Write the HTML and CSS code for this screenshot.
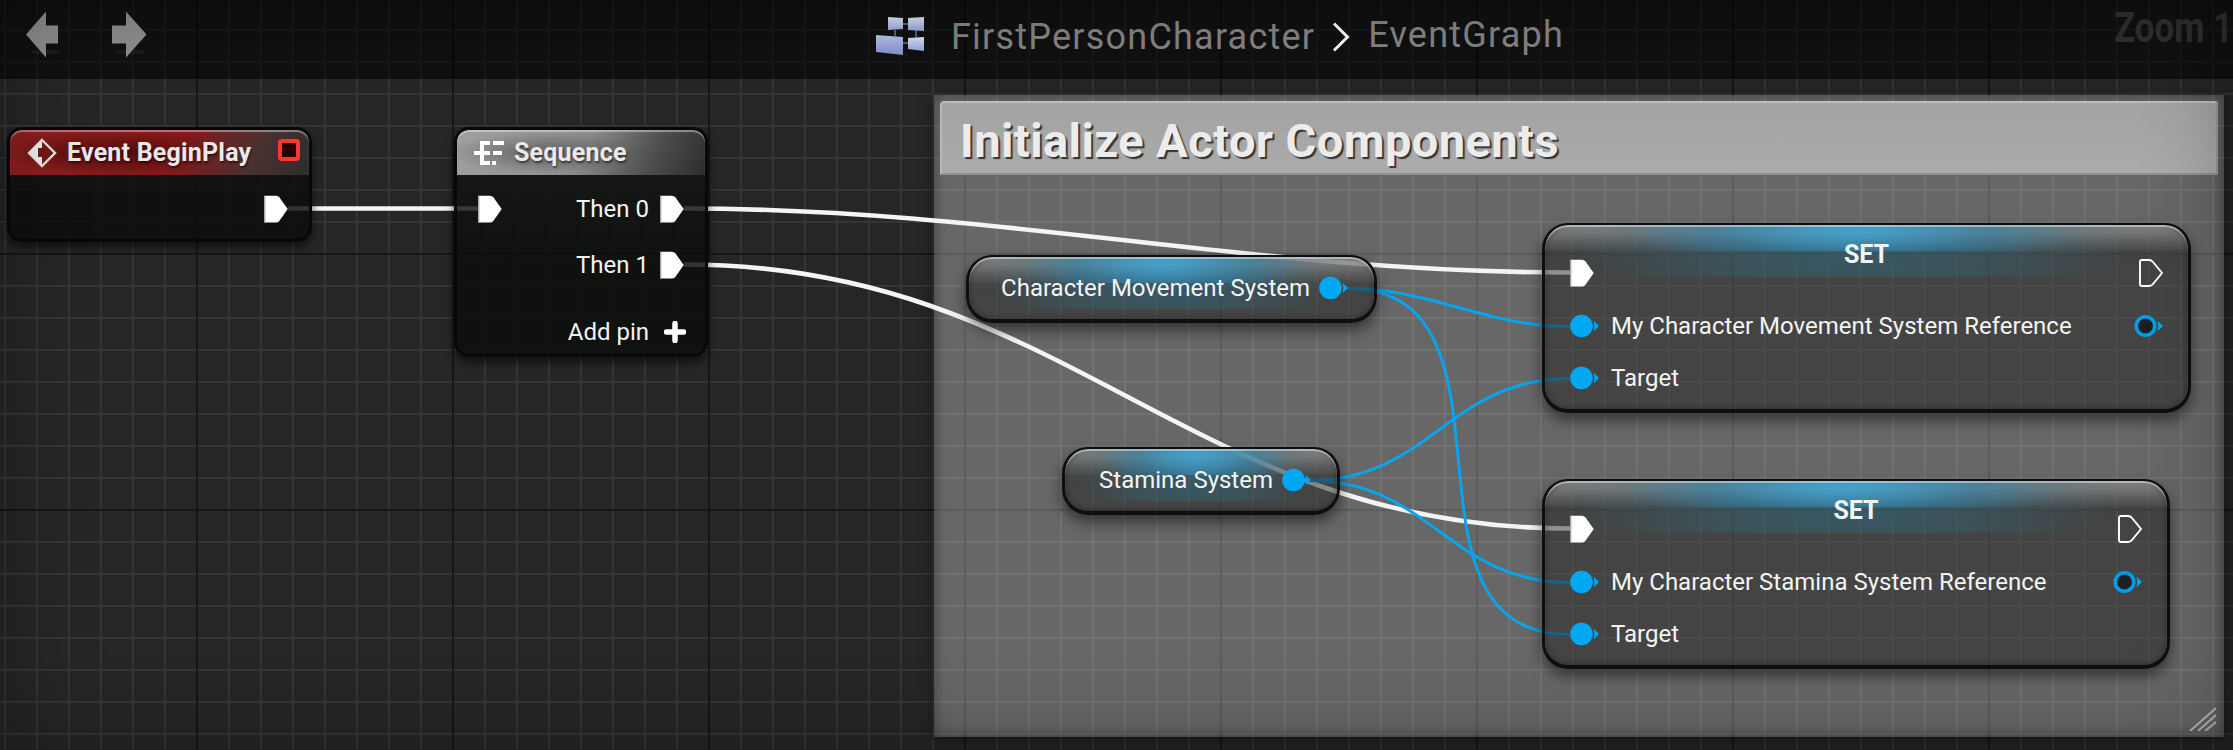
FILE: index.html
```html
<!DOCTYPE html>
<html lang="en">
<head>
<meta charset="utf-8">
<title>EventGraph</title>
<link rel="stylesheet" href="styles.css">
</head>
<body>
<svg width="0" height="0" class="defs">
  <defs>
    <linearGradient id="tile" x1="0" y1="0" x2="0" y2="1"><stop offset="0" stop-color="#dfe6fa"/><stop offset="1" stop-color="#96a5dc"/></linearGradient>
    <linearGradient id="tileBig" x1="0" y1="0" x2="0" y2="1"><stop offset="0" stop-color="#b9c4ee"/><stop offset="1" stop-color="#8292cf"/></linearGradient>
    <symbol id="exec" viewBox="0 0 24 28"><path d="M.5 .7h11.500q2 0 3.300 1.500L23.700 14l-8.400 12q-1.300 1.500-3.300 1.500H.5z" fill="#fff"/><path d="M.7 .7v26.800" stroke="#aaa" stroke-width="1.400"/></symbol>
    <symbol id="exec-open" viewBox="0 0 24 28"><path d="M1 3q0-2 2-2h7q2.500 0 4 2L23 14l-9 11q-1.500 2-4 2H3q-2 0-2-2z" fill="none" stroke="#fff" stroke-width="1.900"/></symbol>
    <symbol id="obj" viewBox="0 0 29 24"><circle cx="11.500" cy="12" r="11.300" fill="#00a8f3"/><path d="M23.300 6.500L29 12l-5.700 5.500q2-5.500 0-11z" fill="#00a8f3"/></symbol>
    <symbol id="obj-open" viewBox="0 0 29 24"><circle cx="11.500" cy="12" r="9.300" fill="#1d2022" stroke="#009ee6" stroke-width="3.600"/><path d="M23.300 6.500L29 12l-5.700 5.500q2-5.500 0-11z" fill="#00a8f3"/></symbol>
  </defs>
</svg>
<main class="graph">
  <section class="comment">
    <h2 class="comment-title">Initialize Actor Components</h2>
    <svg class="grip" width="28" height="24" viewBox="0 0 28 24"><path d="M1 24L27 1M9 24L27 8M16 24l11-9" fill="none" stroke="#bbb" stroke-width="2"/></svg>
  </section>

  <svg class="wires" width="2233" height="750" viewBox="0 0 2233 750">
    <g class="wire-exec">
      <path d="M288 208.500H478"/>
      <path d="M684 208.500C1001 208.500 1253 272.500 1570 272.500"/>
      <path d="M684 264.500C1067 264.500 1187 528.500 1570 528.500"/>
    </g>
    <g class="wire-object">
      <path d="M1347 288.500C1434 288.500 1483 326.500 1570 326.500"/>
      <path d="M1347 288.500C1537 288.500 1380 634.500 1570 634.500"/>
      <path d="M1309 480.500C1430 480.500 1449 378.500 1570 378.500"/>
      <path d="M1309 480.500C1430 480.500 1449 582.500 1570 582.500"/>
    </g>
  </svg>

  <article class="node event">
    <header class="node-head">
      <svg class="head-icon" width="30" height="30" viewBox="0 0 30 30"><path d="M15 2L28 15 15 28 2 15z" fill="none" stroke="#e8e0e0" stroke-width="2.400"/><path d="M15 2v8h-4v9h4v9L1.500 15z" fill="#eee"/></svg>
      <span class="head-text">Event BeginPlay</span>
      <i class="delegate"></i>
    </header>
    <div class="row end"><svg width="24" height="28"><use href="#exec"/></svg></div>
  </article>

  <article class="node sequence">
    <header class="node-head">
      <svg class="head-icon" width="30" height="26" viewBox="0 0 30 26"><path d="M0 13h16M6 3h10M19 3h11M19 13h9M6 23h10M18 23h4M8 2v22" fill="none" stroke="#fff" stroke-width="4"/></svg>
      <span class="head-text">Sequence</span>
    </header>
    <div class="row"><svg width="24" height="28"><use href="#exec"/></svg><span class="push">Then 0</span><svg width="24" height="28"><use href="#exec"/></svg></div>
    <div class="row"><span class="push">Then 1</span><svg width="24" height="28"><use href="#exec"/></svg></div>
    <div class="row add"><span class="push">Add pin</span><svg width="22" height="22" viewBox="0 0 22 22"><path d="M11 2.500v17M2.500 11h17" stroke="#fff" stroke-width="5.500" stroke-linecap="round"/></svg></div>
  </article>

  <article class="node glass variable movement">
    <span>Character Movement System</span><svg width="29" height="24"><use href="#obj"/></svg>
  </article>
  <article class="node glass variable stamina">
    <span>Stamina System</span><svg width="29" height="24"><use href="#obj"/></svg>
  </article>

  <article class="node glass setter set-movement">
    <div class="set-head"><svg width="24" height="28"><use href="#exec"/></svg><b>SET</b><svg width="24" height="28"><use href="#exec-open"/></svg></div>
    <div class="set-row"><svg width="29" height="24"><use href="#obj"/></svg><span class="ref-name">My Character Movement System Reference</span><svg width="29" height="24"><use href="#obj-open"/></svg></div>
    <div class="set-row"><svg width="29" height="24"><use href="#obj"/></svg><span>Target</span></div>
  </article>
  <article class="node glass setter set-stamina">
    <div class="set-head"><svg width="24" height="28"><use href="#exec"/></svg><b>SET</b><svg width="24" height="28"><use href="#exec-open"/></svg></div>
    <div class="set-row"><svg width="29" height="24"><use href="#obj"/></svg><span class="ref-name">My Character Stamina System Reference</span><svg width="29" height="24"><use href="#obj-open"/></svg></div>
    <div class="set-row"><svg width="29" height="24"><use href="#obj"/></svg><span>Target</span></div>
  </article>

  <nav class="topbar">
    <div class="history">
      <svg width="34" height="48" viewBox="0 0 34 48"><ellipse cx="19" cy="42" rx="15" ry="2.500" fill="#1c1c1c"/><path d="M0 24.500L20 1.500v14h12v18H20v14z" fill="#8e8e8e"/></svg>
      <svg width="36" height="48" viewBox="0 0 36 48"><ellipse cx="19" cy="42" rx="15" ry="2.500" fill="#1c1c1c"/><path d="M34.500 24.500L14 1.500v14H0v18h14v14z" fill="#8e8e8e"/></svg>
    </div>
    <div class="crumbs">
      <svg width="48" height="38" viewBox="0 0 48 38"><path d="M26 7h8M26 26h8M19 13v6M40 13v7" stroke="#6e7894" stroke-width="1.500"/><path d="M12 0l15 1v11l-15 1zM32 1l16-1v14l-16-1z" fill="url(#tile)"/><path d="M0 18l27 2v18L0 35z" fill="url(#tileBig)"/><path d="M32 21l16-1v14l-16-2z" fill="url(#tile)"/></svg>
      <span class="crumb">FirstPersonCharacter</span>
      <svg class="chevron" width="18" height="30" viewBox="0 0 18 30"><path d="M2 1.500L15.500 15 2 28.500" fill="none" stroke="#fff" stroke-width="3"/></svg>
      <span class="crumb current">EventGraph</span>
    </div>
    <span class="zoom">Zoom 1</span>
  </nav>
</main>
</body>
</html>
```
FILE: styles.css
```css
body { margin: 0; background: #262626; }
.defs { position: absolute; }
svg { display: block; flex: none; }

.graph {
  position: relative;
  width: 2233px;
  height: 750px;
  overflow: hidden;
  font: 400 24px/40px Roboto, sans-serif;
  color: #f4f4f4;
  background:
    linear-gradient(90deg, #161616 2px, transparent 2px) 196px 0 / 256px 256px,
    linear-gradient(#161616 2px, transparent 2px) 0 253px / 256px 256px,
    linear-gradient(90deg, #353535 2px, transparent 2px) 4px 0 / 32px 32px,
    linear-gradient(#353535 2px, transparent 2px) 0 29px / 32px 32px,
    #262626;
}
.graph::after {
  content: "";
  position: absolute;
  inset: 0;
  pointer-events: none;
  box-shadow: inset 0 0 90px rgba(0, 0, 0, .3);
}

/* Top bar */
.topbar {
  position: absolute;
  inset: 0 0 auto 0;
  height: 79px;
  background: rgba(0, 0, 0, .58);
  white-space: nowrap;
}
.history { position: absolute; left: 26px; top: 10px; display: flex; gap: 52px; }
.crumbs { position: absolute; left: 876px; top: 17px; display: flex; align-items: flex-start; }
.crumb { font-size: 36px; line-height: 40px; letter-spacing: 1.22px; color: #858585; margin-left: 27px; }
.chevron { margin: 5px 0 0 17px; }
.current { margin-left: 18px; margin-top: -2px; }
.zoom {
  position: absolute;
  left: 2114px;
  top: 8px;
  font-weight: 700;
  font-size: 42px;
  color: #2f2f2f;
  transform: scaleX(.83);
  transform-origin: 0 0;
}

/* Comment box */
.comment {
  position: absolute;
  left: 934px;
  top: 95px;
  width: 1290px;
  height: 642px;
  box-sizing: border-box;
  padding: 6px;
  background: rgba(255, 255, 255, .3);
  box-shadow: inset 0 0 14px rgba(0, 0, 0, .4), 0 2px 12px rgba(0, 0, 0, .5);
}
.comment-title {
  box-sizing: border-box;
  margin: 0;
  height: 74px;
  padding-left: 18px;
  border: 2px solid #b8b8b8;
  border-color: #bdbdbd #999 #929292 #b8b8b8;
  border-radius: 4px 2px 0 0;
  background: linear-gradient(#a3a3a3, #ababab);
  font-size: 47px;
  line-height: 76px;
  letter-spacing: .43px;
  color: #ececec;
  text-shadow: 2px 2px 1px #333;
}
.grip { position: absolute; right: 7px; bottom: 6px; }

/* Wires */
.wires { position: absolute; left: 0; top: 0; }
.wire-exec path { fill: none; stroke: #f4f4f4; stroke-width: 4.6; }
.wire-object path { fill: none; stroke: #08a4ec; stroke-width: 3; }

/* Nodes */
.node {
  position: absolute;
  box-sizing: border-box;
  border: 3px solid #080808;
  white-space: nowrap;
}
.event, .sequence {
  top: 127px;
  border-radius: 15px;
  background: linear-gradient(rgba(20, 22, 20, .81), rgba(10, 13, 9, .83) 60%);
  box-shadow: 0 5px 10px rgba(0, 0, 0, .6);
}
.event { left: 7px; width: 305px; height: 115px; }
.sequence { left: 454px; width: 254px; height: 230px; }
.node-head {
  display: flex;
  align-items: center;
  height: 45px;
  box-sizing: border-box;
  border-radius: 12px 12px 0 0;
  box-shadow: inset 0 2px 1px rgba(255, 255, 255, .4);
  font-weight: 700;
  font-size: 25px;
  line-height: 45px;
  letter-spacing: .2px;
  color: #e9e9e9;
}
.event .node-head {
  padding: 0 9px 0 17px;
  background:
    radial-gradient(ellipse 115px 22px at 105px 23px, rgba(35, 0, 0, .6), transparent),
    linear-gradient(115deg, #8e1f1f 0, #861818 55%, #4c3030 80%, #2b2e2b 100%);
}
.sequence .node-head {
  padding: 0 17px;
  background:
    radial-gradient(ellipse 100px 20px at 90px 23px, rgba(50, 50, 50, .5), transparent),
    linear-gradient(115deg, #a0a0a0 0, #8c8c8c 50%, #4c4e4c 78%, #2b2e2b 100%);
}
.head-icon { margin-right: 10px; }
.head-text { text-shadow: 1px 2px 2px rgba(0, 0, 0, .5); }
.delegate {
  width: 14px;
  height: 14px;
  margin: 0 0 5px auto;
  border: 4px solid #ff3434;
  border-radius: 4px;
  background: #240000;
}
.row { display: flex; align-items: center; height: 56px; padding: 0 21px 0 21px; margin-top: 6px; }
.row + .row { margin-top: 0; }
.row.add { margin-top: 11px; padding-right: 19px; }
.push { margin-left: auto; margin-right: 11px; }
.add .push { margin-right: 15px; }
.end { justify-content: flex-end; }

.glass {
  border-radius: 26px;
  border-color: #0e0e0e;
  border-top-width: 2px;
  border-bottom-width: 4px;
  background:
    radial-gradient(ellipse 36% 50px at 48% 0, rgba(70, 185, 240, .75), rgba(40, 150, 205, .35) 60%, transparent) 0 0 / 100% 26px no-repeat,
    radial-gradient(ellipse 45% 90px at 48% 10px, rgba(40, 120, 150, .5), rgba(40, 120, 150, .28) 50%, transparent) 0 0 / 100% 52px no-repeat,
    linear-gradient(rgba(165, 165, 165, .7), rgba(60, 62, 60, .2) 28px, transparent 50px),
    rgba(27, 28, 26, .46);
  background-clip: padding-box;
  box-shadow: 0 7px 14px rgba(0, 0, 0, .5), inset 0 2px 1px rgba(255, 255, 255, .5), inset 0 0 6px rgba(0, 0, 0, .4);
}
.variable { height: 68px; display: flex; align-items: center; justify-content: flex-end; padding-right: 26px; gap: 9px; }
.movement { left: 966px; top: 255px; width: 411px; }
.stamina { left: 1062px; top: 447px; width: 278px; }

.setter { height: 190px; left: 1542px; padding: 0 25px; }
.set-movement { top: 223px; width: 649px; }
.set-stamina { top: 479px; width: 628px; }
.set-head { display: flex; height: 62px; align-items: flex-end; justify-content: space-between; }
.set-head b { align-self: flex-start; padding-top: 15px; line-height: 30px; font-size: 25px; }
.set-row { display: flex; align-items: center; height: 40px; margin-top: 19px; gap: 12px; }
.set-row + .set-row { margin-top: 12px; }
.ref-name { flex: 1; }
```
